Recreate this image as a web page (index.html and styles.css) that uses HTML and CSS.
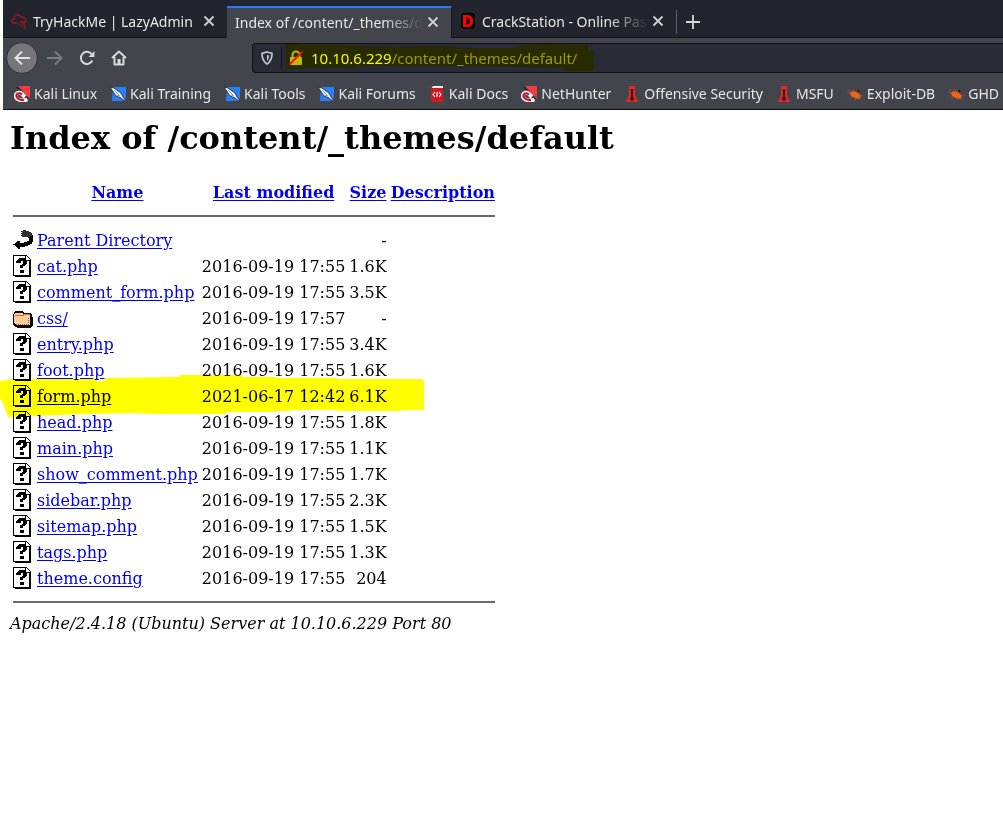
FILE: index.html
```html
<!DOCTYPE html>
<html lang="en">
<head>
<meta charset="utf-8">
<title>Index of /content/_themes/default</title>
<link rel="stylesheet" href="styles.css">
</head>
<body>
<svg class="defs" aria-hidden="true">
  <symbol id="i-close" viewBox="0 0 12 12"><path d="M1.5 1.5l9 9m0-9l-9 9" stroke="#d0d0d3" stroke-width="1.8" fill="none"/></symbol>
  <symbol id="i-kali" viewBox="0 0 16 16"><path d="M4 0h12v13z" fill="#f33a40"/><path d="M3 1l11 12" stroke="#25222a" stroke-width="1.500"/><path d="M13.500 13.500C7 16 1 13 2 9c.7-3 4-3 6-1l3 3" fill="none" stroke="#f2f2f2" stroke-width="4"/><path d="M10 14C6 14.500 2 12 2.500 9 3.500 6.500 6 7 8 8.500" fill="none" stroke="#c5152d" stroke-width="2.200"/></symbol>
  <symbol id="i-knife" viewBox="0 0 16 16"><path d="M3 1h13v11l-3 3H2z" fill="#2580ff"/><path d="M0 1l4 1 7 5 1.500 3 3.500 5v1l-5-4-5-2z" fill="#f4f4f4" stroke="#222936" stroke-width=".9"/><path d="M4 4l5 5M7 9l3 1" stroke="#738195" stroke-width=".8"/></symbol>
  <symbol id="i-docs" viewBox="0 0 16 16"><path d="M4 0h10v3H2z" fill="#eee"/><path d="M2 2h12v14H2z" fill="#d5171f"/><path d="M6 6L4 8.500 6 11m4-5l2 2.500-2 2.500M9 7H8c-1 1 1 2 0 3H7" stroke="#fff" stroke-width="1.1" fill="none"/></symbol>
  <symbol id="i-tower" viewBox="0 0 16 16"><path d="M5 0h6v10l3 5v1H2v-1l3-5z" fill="#e02a2c"/><path d="M8 3v12" stroke="#32090d" stroke-width="1.600"/><path d="M6.500 4.500h3M6 12h4l-2 3z" stroke="#32090d" fill="#32090d"/></symbol>
  <symbol id="i-bug" viewBox="0 0 16 16"><path d="M1 6l13 7M6 3l3 3M10 3l0 3 4 1M0 6l5 2M3 13l3-3M8 14l1-2M1 3l4 3M14 9l2 1" stroke="#a75035" stroke-width=".8"/><path d="M3 7l3-2 5 2 3 3-2 3-4-1-4-2z" fill="#f1651b"/></symbol>
  <symbol id="i-unknown" viewBox="0 0 20 22" shape-rendering="crispEdges"><path d="M0 0h13l5 5v17H2v-1H0z"/><path d="M1 1h11v5h4v14H1z" fill="#fff"/><path d="M13 1v4h4z" fill="#fff"/><path d="M3 6h1V5h1V4h1V3h6v1h1v1h1v4h-1v1h-1v1h-2v2H7v-3h2V9h1V6H8v2H3zM7 15h4v3H7z"/></symbol>
  <symbol id="i-folder" viewBox="0 0 20 22" shape-rendering="crispEdges"><path d="M0 7h1V5h1V4h8v1h1v1h7v1h1v3h1v9h-1v1h-1v1H4v-1H2v-1H1v-1H0z"/><path d="M1 8l1-2h7l2 2h6v10H3l-2-2z" fill="#fc9"/><path d="M2 8.500h8l1-1h6" stroke="#b9783f" fill="none"/><path d="M3 17.500h14M15.500 11v7" stroke="#a65f2e" stroke-dasharray="1 1"/></symbol>
  <symbol id="i-back" viewBox="0 0 20 22" shape-rendering="crispEdges"><path d="M8 2h2V1h3v1h3v1h2v1h1v2h1v2H8z" fill="#333"/><path d="M9 1.500h2M8 3.500h1M8 5.500h2M8 7.500h1" stroke="#fff" stroke-dasharray="1 1"/><path d="M8 9h6l6-3v7h-1v2h-2v1h-2v1h-3v1H7v2H5v-1H4v-1H3v-1H2v-1H0v-1h2v-1h1v-1h1v-1h3v2h4v-1h3v-1h2V9z"/></symbol>
</svg>

<header class="browser">
  <div class="tabs" role="tablist">
    <div class="tab">
      <svg class="favicon" viewBox="0 0 16 16"><path d="M6 10H3C-1 9 1 5 3 6c0-4 5-6 7-2 4-1 6 3 4 5H9" fill="none" stroke="#a9161f" stroke-width="1.300"/><path d="M7 11h2m2 0h3M9 13h3m1 0h2M12 15h3" stroke="#a9161f" stroke-width="1.200"/></svg>
      <span class="tab-title">TryHackMe | LazyAdmin</span>
      <button class="close" aria-label="Close tab"><svg><use href="#i-close"/></svg></button>
    </div>
    <div class="tab active">
      <span class="tab-title faded">Index of /content/_themes/d</span>
      <button class="close" aria-label="Close tab"><svg><use href="#i-close"/></svg></button>
    </div>
    <div class="tab">
      <svg class="favicon" viewBox="0 0 16 16"><rect x="1" y="0" width="14" height="16" rx="4" fill="#000"/><path d="M3 2h6q4 1 4 6t-4 6H3zM6.500 4.500v7h1.500q2-1 2-3.500T8 4.500z" fill="#f00" fill-rule="evenodd"/></svg>
      <span class="tab-title faded">CrackStation - Online Pas</span>
      <button class="close" aria-label="Close tab"><svg><use href="#i-close"/></svg></button>
    </div>
    <button class="new-tab" aria-label="New tab"><svg viewBox="0 0 14 14"><path d="M7 0v14M0 7h14" stroke="#d8d8da" stroke-width="1.800"/></svg></button>
  </div>
  <nav class="toolbar" aria-label="Navigation">
    <button class="tool back" aria-label="Back"><svg viewBox="0 0 16 16"><path d="M16 8H1.500M8 1.500L1.500 8 8 14.500" fill="none" stroke="#e4e4e6" stroke-width="1.900"/></svg></button>
    <button class="tool" aria-label="Forward"><svg viewBox="0 0 16 16"><path d="M0 8h14.500M8 1.500L14.500 8 8 14.500" fill="none" stroke="#7c7e83" stroke-width="1.900"/></svg></button>
    <button class="tool" aria-label="Reload"><svg viewBox="0 0 16 16"><path d="M13.300 10.500A6 6 0 1 1 12.500 4" fill="none" stroke="#d8d8da" stroke-width="2"/><path d="M15.500 1v6H9.500z" fill="#d8d8da"/></svg></button>
    <button class="tool" aria-label="Home"><svg viewBox="0 0 16 16"><path d="M1 8l7-6.500L15 8M3.500 7v7.500h9V7" fill="none" stroke="#d8d8da" stroke-width="2" stroke-linejoin="round"/><path d="M6.500 9h3v5h-3z" fill="#d8d8da"/></svg></button>
    <div class="address">
      <svg class="shield" viewBox="0 0 14 16"><path d="M7 2l5 1.500c0 4.500-1 8-5 10.500C3 11.500 2 8 2 3.500z" fill="none" stroke="#c0c1c5" stroke-width="1.800"/><path d="M7 5v6c1.500-1.500 2-3 2-5.500z" fill="#c0c1c5"/></svg>
      <span class="divider"></span>
      <svg class="lock" viewBox="0 0 16 16"><path d="M4.500 7V5a3.500 3.500 0 0 1 7 0v2" fill="none" stroke="#bcbcc0" stroke-width="2"/><rect x="2" y="7" width="12" height="8" rx="1" fill="#bcbcc0"/><path d="M1.500 14.500l13-13" stroke="#f01820" stroke-width="2"/></svg>
      <div class="url" role="textbox" aria-label="Address" tabindex="0"><span class="host">10.10.6.229</span>/content/_themes/default/</div>
      <svg class="url-mark" viewBox="0 0 308 29" aria-hidden="true"><path d="M0 0h14v2h40l45 2 60-1 24 2h45l10-3 22-2 25 2h17v6h6v20h-30v-3l-40-1-55-1H70v2H18v1H0z" fill="#ff0"/></svg>
    </div>
  </nav>
  <nav class="bookmarks" aria-label="Bookmarks">
    <a href="#"><svg><use href="#i-kali"/></svg>Kali Linux</a>
    <a href="#"><svg><use href="#i-knife"/></svg>Kali Training</a>
    <a href="#"><svg><use href="#i-knife"/></svg>Kali Tools</a>
    <a href="#"><svg><use href="#i-knife"/></svg>Kali Forums</a>
    <a href="#"><svg><use href="#i-docs"/></svg>Kali Docs</a>
    <a href="#"><svg><use href="#i-kali"/></svg>NetHunter</a>
    <a href="#"><svg><use href="#i-tower"/></svg>Offensive Security</a>
    <a href="#"><svg><use href="#i-tower"/></svg>MSFU</a>
    <a href="#"><svg><use href="#i-bug"/></svg>Exploit-DB</a>
    <a href="#"><svg><use href="#i-bug"/></svg>GHD</a>
  </nav>
</header>

<main class="listing">
  <h1>Index of /content/_themes/default</h1>
  <table>
    <thead>
      <tr><th class="icon"><svg></svg></th><th><a href="#">Name</a></th><th><a href="#">Last modified</a></th><th><a href="#">Size</a></th><th><a href="#">Description</a></th></tr>
      <tr><th colspan="5"><hr></th></tr>
    </thead>
    <tbody>
      <tr><td class="icon"><svg><use href="#i-back"/></svg></td><td><a href="#">Parent Directory</a></td><td></td><td class="num">-</td><td></td></tr>
      <tr><td class="icon"><svg><use href="#i-unknown"/></svg></td><td><a href="#">cat.php</a></td><td class="num">2016-09-19 17:55</td><td class="num">1.6K</td><td></td></tr>
      <tr><td class="icon"><svg><use href="#i-unknown"/></svg></td><td><a href="#">comment_form.php</a></td><td class="num">2016-09-19 17:55</td><td class="num">3.5K</td><td></td></tr>
      <tr><td class="icon"><svg><use href="#i-folder"/></svg></td><td><a href="#">css/</a></td><td class="num">2016-09-19 17:57</td><td class="num">-</td><td></td></tr>
      <tr><td class="icon"><svg><use href="#i-unknown"/></svg></td><td><a href="#">entry.php</a></td><td class="num">2016-09-19 17:55</td><td class="num">3.4K</td><td></td></tr>
      <tr><td class="icon"><svg><use href="#i-unknown"/></svg></td><td><a href="#">foot.php</a></td><td class="num">2016-09-19 17:55</td><td class="num">1.6K</td><td></td></tr>
      <tr class="marked"><td class="icon"><svg><use href="#i-unknown"/></svg><svg class="row-mark" viewBox="0 0 424 44" aria-hidden="true"><path d="M0 7l12-2h93V4l75-1V1h62v2h34v1h61v1h85v1h2v30h-22v1h-65v-1h-47v1h-14v1h-50v2h-73l-23-1-40 1-60 2v1H8l-3-8-2-6-3-4zM96 5v2h9V5z" fill="#ff0" fill-rule="evenodd"/></svg></td><td><a href="#">form.php</a></td><td class="num">2021-06-17 12:42</td><td class="num">6.1K</td><td></td></tr>
      <tr><td class="icon"><svg><use href="#i-unknown"/></svg></td><td><a href="#">head.php</a></td><td class="num">2016-09-19 17:55</td><td class="num">1.8K</td><td></td></tr>
      <tr><td class="icon"><svg><use href="#i-unknown"/></svg></td><td><a href="#">main.php</a></td><td class="num">2016-09-19 17:55</td><td class="num">1.1K</td><td></td></tr>
      <tr><td class="icon"><svg><use href="#i-unknown"/></svg></td><td><a href="#">show_comment.php</a></td><td class="num">2016-09-19 17:55</td><td class="num">1.7K</td><td></td></tr>
      <tr><td class="icon"><svg><use href="#i-unknown"/></svg></td><td><a href="#">sidebar.php</a></td><td class="num">2016-09-19 17:55</td><td class="num">2.3K</td><td></td></tr>
      <tr><td class="icon"><svg><use href="#i-unknown"/></svg></td><td><a href="#">sitemap.php</a></td><td class="num">2016-09-19 17:55</td><td class="num">1.5K</td><td></td></tr>
      <tr><td class="icon"><svg><use href="#i-unknown"/></svg></td><td><a href="#">tags.php</a></td><td class="num">2016-09-19 17:55</td><td class="num">1.3K</td><td></td></tr>
      <tr><td class="icon"><svg><use href="#i-unknown"/></svg></td><td><a href="#">theme.config</a></td><td class="num">2016-09-19 17:55</td><td class="num">204</td><td></td></tr>
    </tbody>
    <tfoot><tr><th colspan="5"><hr></th></tr></tfoot>
  </table>
  <address>Apache/2.4.18 (Ubuntu) Server at 10.10.6.229 Port 80</address>
</main>
</body>
</html>
```
FILE: styles.css
```css
* { box-sizing: border-box; }
body { margin: 0; background: #fff; color: #000; font: 16px "DejaVu Serif", serif; overflow-x: hidden; }
.defs { display: none; }
button { border: 0; padding: 0; background: none; display: flex; align-items: center; justify-content: center; }

.browser { margin-left: 3px; background: #42454b; color: #e6e6e8; font-family: "Noto Sans", sans-serif; font-size: 14px; border-bottom: 1px solid #0c0d10; overflow: hidden; }
.tabs { display: flex; height: 38px; padding-top: 6px; background: #23252e; border-bottom: 1px solid #111218; }
.tab { display: flex; align-items: center; width: 224px; height: 32px; padding: 0 8px 2px; flex: none; }
.tab.active { width: 225px; background: #42454b; border-top: 2px solid #2a7bf6; border-right: 1px solid #14151a; }
.favicon { width: 16px; height: 16px; margin-right: 6px; flex: none; }
.tab-title { flex: 1; overflow: hidden; white-space: nowrap; }
.faded { mask-image: linear-gradient(to left, transparent, #000 40px); }
.close { width: 20px; height: 20px; flex: none; }
.close svg { width: 12px; height: 12px; }
.new-tab { width: 32px; height: 24px; margin-top: 4px; border-left: 1px solid #5c5e66; }
.new-tab svg { width: 14px; height: 14px; }

.toolbar { display: flex; align-items: center; height: 40px; padding-left: 3px; }
.tool { width: 32px; height: 32px; flex: none; border-radius: 50%; }
.tool svg { width: 16px; height: 16px; }
.back { margin-right: 1px; background: #74767a; border: 1px solid #2c2e34; }
.address { position: relative; display: flex; align-items: center; flex: 1; height: 30px; margin-left: 117px; padding-left: 7px; background: #282a35; border: 1px solid #111218; border-right: 0; border-radius: 4px 0 0 4px; }
.shield { width: 14px; height: 16px; }
.divider { width: 1px; height: 22px; margin: 0 5px 0 7px; background: #14151b; }
.lock { width: 18px; height: 16px; }
.url { margin-left: 6px; font-size: 15px; color: #9a9ba3; white-space: nowrap; }
.host { color: #f8f8fa; }
.url-mark { position: absolute; left: 33px; top: -1px; width: 308px; height: 29px; mix-blend-mode: multiply; }

.bookmarks { display: flex; gap: 13px; height: 31px; padding: 0 0 0 11px; align-items: center; }
.bookmarks a { display: flex; align-items: center; gap: 4px; flex: none; color: inherit; text-decoration: none; white-space: nowrap; }
.bookmarks svg { width: 16px; height: 16px; }

.listing { padding: 9px 10px 8px; }
h1 { margin: 0 0 21px; font-size: 32px; line-height: 38px; font-weight: bold; }
table { border-spacing: 2px; }
th, td { padding: 1px; white-space: nowrap; }
.icon { vertical-align: top; }
.icon svg { display: block; width: 20px; height: 22px; }
.num { text-align: right; }
a { color: #00e; text-underline-offset: 2px; }
hr { margin: 8px 0; border: 0; height: 2px; background: #6a6a6a; }
.marked .icon { position: relative; }
.icon .row-mark { position: absolute; left: -12px; top: -10px; width: 424px; height: 44px; mix-blend-mode: multiply; }
```
